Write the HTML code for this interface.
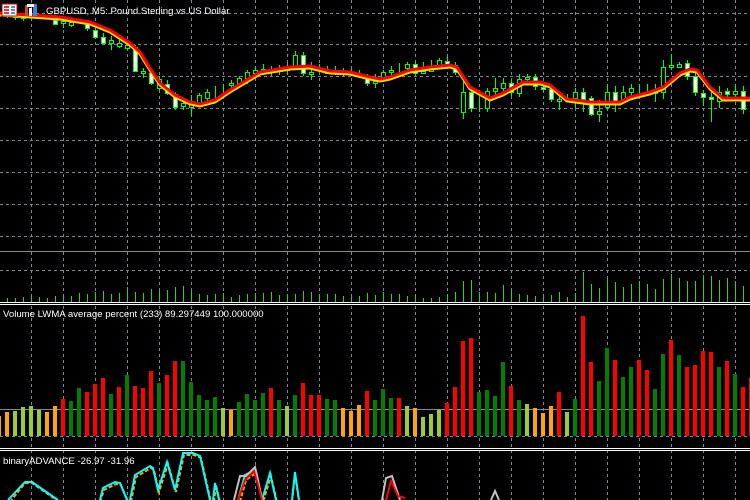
<!DOCTYPE html>
<html><head><meta charset="utf-8"><style>
html,body{margin:0;padding:0;background:#000;width:750px;height:500px;overflow:hidden}
svg{display:block}
text{font-family:"Liberation Sans",sans-serif;font-size:9.6px;fill:#fff}
</style></head><body>
<svg width="750" height="500" viewBox="0 0 750 500" xmlns="http://www.w3.org/2000/svg">
<rect width="750" height="500" fill="#000"/>
<g stroke="#7d8796" stroke-width="1" stroke-dasharray="3,3" fill="none" shape-rendering="crispEdges">
<path d="M31.5 0V500M63.5 0V500M95.5 0V500M127.5 0V500M159.5 0V500M191.5 0V500M223.5 0V500M255.5 0V500M287.5 0V500M319.5 0V500M351.5 0V500M383.5 0V500M415.5 0V500M447.5 0V500M479.5 0V500M511.5 0V500M543.5 0V500M575.5 0V500M607.5 0V500M639.5 0V500M671.5 0V500M703.5 0V500M735.5 0V500"/>
<path d="M0 13.5H750M0 44.5H750M0 76.5H750M0 108.5H750M0 140.5H750M0 172.5H750M0 204.5H750M0 236.5H750M0 270.5H750M0 436.5H750"/>
</g>
<path d="M0 251.5H750M0 409.5H750" stroke="#8a8a8a" stroke-width="1" shape-rendering="crispEdges"/>
<!-- volume lines -->
<g stroke="#32cd32" stroke-width="1" shape-rendering="crispEdges">
<path d="M7.5 302v-4M15.5 302v-4M23.5 302v-5M31.5 302v-6M39.5 302v-5M47.5 302v-4M55.5 302v-6M63.5 302v-6M71.5 302v-6M79.5 302v-9M87.5 302v-8M95.5 302v-10M103.5 302v-11M111.5 302v-8M119.5 302v-9M127.5 302v-15M135.5 302v-10M143.5 302v-9M151.5 302v-13M159.5 302v-11M167.5 302v-12M175.5 302v-15M183.5 302v-16M191.5 302v-11M199.5 302v-8M207.5 302v-7M215.5 302v-8M223.5 302v-9M231.5 302v-5M239.5 302v-7M247.5 302v-8M255.5 302v-9M263.5 302v-9M271.5 302v-10M279.5 302v-7M287.5 302v-8M295.5 302v-8M303.5 302v-11M311.5 302v-10M319.5 302v-8M327.5 302v-8M335.5 302v-8M343.5 302v-6M351.5 302v-5M359.5 302v-6M367.5 302v-9M375.5 302v-7M383.5 302v-10M391.5 302v-8M399.5 302v-8M407.5 302v-6M415.5 302v-8M423.5 302v-4M431.5 302v-4M439.5 302v-5M447.5 302v-8M455.5 302v-10M463.5 302v-21M471.5 302v-22M479.5 302v-10M487.5 302v-10M495.5 302v-9M503.5 302v-17M511.5 302v-13M519.5 302v-8M527.5 302v-7M535.5 302v-6M543.5 302v-5M551.5 302v-7M559.5 302v-10M567.5 302v-5M575.5 302v-9M583.5 302v-30M591.5 302v-18M599.5 302v-14M607.5 302v-23M615.5 302v-20M623.5 302v-15M631.5 302v-18M639.5 302v-21M647.5 302v-18M655.5 302v-13M663.5 302v-23M671.5 302v-28M679.5 302v-24M687.5 302v-21M695.5 302v-21M703.5 302v-27M711.5 302v-26M719.5 302v-22M727.5 302v-24M735.5 302v-21M743.5 302v-16"/>
</g>
<path d="M0 302.5H750M0 304.5H750M0 448.5H750M0 450.5H750" stroke="#fff" stroke-width="1" shape-rendering="crispEdges"/>
<!-- histogram -->
<g shape-rendering="crispEdges">
<g fill="#ffa500"><rect x="-3" y="416" width="4" height="20"/><rect x="5" y="412" width="4" height="24"/><rect x="45" y="412" width="4" height="24"/><rect x="53" y="406" width="4" height="30"/><rect x="229" y="410" width="4" height="26"/><rect x="341" y="408" width="4" height="28"/><rect x="349" y="411" width="4" height="25"/><rect x="357" y="405" width="4" height="31"/><rect x="413" y="408" width="4" height="28"/><rect x="533" y="408" width="4" height="28"/><rect x="541" y="413" width="4" height="23"/><rect x="549" y="406" width="4" height="30"/></g>
<g fill="#9acd32"><rect x="13" y="411" width="4" height="25"/><rect x="21" y="407" width="4" height="29"/><rect x="29" y="406" width="4" height="30"/><rect x="37" y="410" width="4" height="26"/><rect x="221" y="408" width="4" height="28"/><rect x="285" y="406" width="4" height="30"/><rect x="405" y="406" width="4" height="30"/><rect x="421" y="417" width="4" height="19"/><rect x="429" y="414" width="4" height="22"/><rect x="437" y="410" width="4" height="26"/><rect x="525" y="404" width="4" height="32"/><rect x="565" y="412" width="4" height="24"/></g>
<g fill="#007f00"><rect x="69" y="401" width="4" height="35"/><rect x="77" y="388" width="4" height="48"/><rect x="109" y="394" width="4" height="42"/><rect x="125" y="375" width="4" height="61"/><rect x="157" y="383" width="4" height="53"/><rect x="181" y="361" width="4" height="75"/><rect x="189" y="382" width="4" height="54"/><rect x="197" y="395" width="4" height="41"/><rect x="205" y="400" width="4" height="36"/><rect x="213" y="397" width="4" height="39"/><rect x="237" y="402" width="4" height="34"/><rect x="245" y="394" width="4" height="42"/><rect x="253" y="400" width="4" height="36"/><rect x="261" y="393" width="4" height="43"/><rect x="277" y="400" width="4" height="36"/><rect x="293" y="395" width="4" height="41"/><rect x="325" y="399" width="4" height="37"/><rect x="333" y="400" width="4" height="36"/><rect x="373" y="400" width="4" height="36"/><rect x="381" y="389" width="4" height="47"/><rect x="389" y="398" width="4" height="38"/><rect x="477" y="392" width="4" height="44"/><rect x="485" y="390" width="4" height="46"/><rect x="493" y="396" width="4" height="40"/><rect x="501" y="362" width="4" height="74"/><rect x="517" y="400" width="4" height="36"/><rect x="573" y="399" width="4" height="37"/><rect x="597" y="381" width="4" height="55"/><rect x="605" y="348" width="4" height="88"/><rect x="621" y="377" width="4" height="59"/><rect x="629" y="367" width="4" height="69"/><rect x="653" y="389" width="4" height="47"/><rect x="661" y="354" width="4" height="82"/><rect x="677" y="355" width="4" height="81"/><rect x="717" y="367" width="4" height="69"/><rect x="733" y="374" width="4" height="62"/></g>
<g fill="#ff0000"><rect x="61" y="399" width="4" height="37"/><rect x="85" y="392" width="4" height="44"/><rect x="93" y="384" width="4" height="52"/><rect x="101" y="378" width="4" height="58"/><rect x="117" y="387" width="4" height="49"/><rect x="133" y="386" width="4" height="50"/><rect x="141" y="388" width="4" height="48"/><rect x="149" y="371" width="4" height="65"/><rect x="165" y="375" width="4" height="61"/><rect x="173" y="361" width="4" height="75"/><rect x="269" y="388" width="4" height="48"/><rect x="301" y="383" width="4" height="53"/><rect x="309" y="395" width="4" height="41"/><rect x="317" y="395" width="4" height="41"/><rect x="365" y="391" width="4" height="45"/><rect x="397" y="398" width="4" height="38"/><rect x="445" y="403" width="4" height="33"/><rect x="453" y="387" width="4" height="49"/><rect x="461" y="341" width="4" height="95"/><rect x="469" y="338" width="4" height="98"/><rect x="509" y="386" width="4" height="50"/><rect x="557" y="392" width="4" height="44"/><rect x="581" y="316" width="4" height="120"/><rect x="589" y="362" width="4" height="74"/><rect x="613" y="360" width="4" height="76"/><rect x="637" y="360" width="4" height="76"/><rect x="645" y="370" width="4" height="66"/><rect x="669" y="340" width="4" height="96"/><rect x="685" y="367" width="4" height="69"/><rect x="693" y="365" width="4" height="71"/><rect x="701" y="351" width="4" height="85"/><rect x="709" y="352" width="4" height="84"/><rect x="725" y="361" width="4" height="75"/><rect x="741" y="387" width="4" height="49"/><rect x="749" y="378" width="4" height="58"/></g>
</g>
<!-- candles wicks -->
<g stroke="#00ff00" stroke-width="1" fill="none" shape-rendering="crispEdges">
<path d="M7.5 11V18M15.5 13V20M23.5 14V21M55.5 15V25M63.5 20V28M71.5 19V27M87.5 20V31M95.5 28V39M103.5 33V44M111.5 36V50M119.5 40V48M127.5 41V50M135.5 45V72M143.5 68V78M151.5 70V85M159.5 76V91M167.5 80V95M175.5 92V110M183.5 100V110M191.5 95V116M199.5 93V106M207.5 89V105M215.5 86V100M223.5 84V92M231.5 80V88M239.5 76V88M247.5 70V84M255.5 66V77M263.5 64V75M271.5 66V76M279.5 65V75M287.5 63V75M295.5 51V68M303.5 52V76M311.5 62V80M319.5 64V72M327.5 66V74M335.5 66V75M343.5 68V76M351.5 68V76M359.5 70V78M367.5 74V86M375.5 74V88M383.5 70V80M391.5 66V76M399.5 63V74M407.5 62V70M415.5 62V76M423.5 62V70M431.5 60V72M439.5 58V68M447.5 56V66M455.5 62V75M463.5 80V119M471.5 88V112M479.5 98V112M487.5 88V112M495.5 78V95M503.5 78V92M511.5 80V96M519.5 74V97M527.5 74V82M535.5 74V90M543.5 84V92M551.5 86V102M559.5 94V110M567.5 94V102M575.5 88V108M583.5 88V112M591.5 96V116M599.5 100V122M607.5 84V110M615.5 86V112M623.5 86V102M631.5 84V96M639.5 84V94M647.5 84V95M655.5 84V102M663.5 60V99M671.5 54V70M679.5 62V68M687.5 60V80M695.5 72V96M703.5 90V106M711.5 90V122M719.5 86V108M727.5 88V98M735.5 84V100M743.5 86V114"/>
</g>
<g stroke="#00ff00" stroke-width="1" shape-rendering="crispEdges">
<g fill="#000"><rect x="5.5" y="13.5" width="4" height="3"/><rect x="13.5" y="15.5" width="4" height="2"/><rect x="21.5" y="16.5" width="4" height="2"/><rect x="61.5" y="21.5" width="4" height="2"/><rect x="69.5" y="22.5" width="4" height="3"/><rect x="109.5" y="40.5" width="4" height="3"/><rect x="117.5" y="43.5" width="4" height="3"/><rect x="125.5" y="45.5" width="4" height="3"/><rect x="141.5" y="71.5" width="4" height="2"/><rect x="157.5" y="79.5" width="4" height="9"/><rect x="181.5" y="103.5" width="4" height="3"/><rect x="189.5" y="103.5" width="4" height="4"/><rect x="197.5" y="95.5" width="4" height="9"/><rect x="205.5" y="92.5" width="4" height="6"/><rect x="229.5" y="83.5" width="4" height="2"/><rect x="237.5" y="78.5" width="4" height="5"/><rect x="245.5" y="72.5" width="4" height="6"/><rect x="253.5" y="70.5" width="4" height="3"/><rect x="261.5" y="69.5" width="4" height="2"/><rect x="285.5" y="67.5" width="4" height="3"/><rect x="293.5" y="55.5" width="4" height="11"/><rect x="309.5" y="72.5" width="4" height="2"/><rect x="325.5" y="71.5" width="4" height="2"/><rect x="333.5" y="70.5" width="4" height="2"/><rect x="373.5" y="81.5" width="4" height="2"/><rect x="381.5" y="72.5" width="4" height="5"/><rect x="389.5" y="70.5" width="4" height="2"/><rect x="405.5" y="64.5" width="4" height="4"/><rect x="421.5" y="71.5" width="4" height="2"/><rect x="429.5" y="66.5" width="4" height="5"/><rect x="437.5" y="60.5" width="4" height="6"/><rect x="461.5" y="92.5" width="4" height="20"/><rect x="485.5" y="91.5" width="4" height="17"/><rect x="493.5" y="88.5" width="4" height="3"/><rect x="501.5" y="83.5" width="4" height="5"/><rect x="517.5" y="79.5" width="4" height="14"/><rect x="525.5" y="77.5" width="4" height="2"/><rect x="557.5" y="99.5" width="4" height="2"/><rect x="573.5" y="92.5" width="4" height="6"/><rect x="597.5" y="111.5" width="4" height="3"/><rect x="605.5" y="92.5" width="4" height="15"/><rect x="621.5" y="92.5" width="4" height="7"/><rect x="629.5" y="88.5" width="4" height="4"/><rect x="653.5" y="91.5" width="4" height="2"/><rect x="661.5" y="67.5" width="4" height="25"/><rect x="669.5" y="65.5" width="4" height="2"/><rect x="677.5" y="64.5" width="4" height="3"/><rect x="717.5" y="92.5" width="4" height="9"/><rect x="733.5" y="91.5" width="4" height="3"/></g>
<g fill="#fff"><rect x="53.5" y="20.5" width="4" height="4"/><rect x="85.5" y="22.5" width="4" height="6"/><rect x="93.5" y="30.5" width="4" height="7"/><rect x="101.5" y="37.5" width="4" height="6"/><rect x="133.5" y="47.5" width="4" height="24"/><rect x="149.5" y="73.5" width="4" height="10"/><rect x="165.5" y="84.5" width="4" height="9"/><rect x="173.5" y="94.5" width="4" height="13"/><rect x="301.5" y="55.5" width="4" height="18"/><rect x="365.5" y="77.5" width="4" height="6"/><rect x="413.5" y="64.5" width="4" height="9"/><rect x="445.5" y="61.5" width="4" height="4"/><rect x="453.5" y="65.5" width="4" height="7"/><rect x="469.5" y="92.5" width="4" height="16"/><rect x="509.5" y="83.5" width="4" height="9"/><rect x="533.5" y="77.5" width="4" height="9"/><rect x="541.5" y="87.5" width="4" height="2"/><rect x="549.5" y="89.5" width="4" height="10"/><rect x="581.5" y="92.5" width="4" height="7"/><rect x="589.5" y="98.5" width="4" height="16"/><rect x="613.5" y="92.5" width="4" height="10"/><rect x="685.5" y="63.5" width="4" height="13"/><rect x="693.5" y="76.5" width="4" height="16"/><rect x="701.5" y="93.5" width="4" height="4"/><rect x="709.5" y="97.5" width="4" height="2"/><rect x="725.5" y="91.5" width="4" height="3"/><rect x="741.5" y="91.5" width="4" height="18"/></g>
</g>
<!-- MA lines -->
<path d="M0 15 L30 17 L60 19 L90 24 L110 32 L130 45 L140 54 L150 70 L160 85 L175 97 L190 104 L200 106 L215 102 L230 92 L260 74 L290 69 L310 68 L330 73 L350 74 L370 79 L380 81 L390 79 L410 72 L430 69 L450 67 L457 69 L470 89 L490 100 L503 95 L523 84 L540 84 L550 87 L567 101 L590 104 L620 104 L630 99 L650 94 L663 89 L680 75 L690 71 L697 72 L710 89 L723 100 L750 100" fill="none" stroke="#ffd700" stroke-width="3"/>
<path d="M0 13 L30 15 L60 17 L90 22 L110 30 L130 43 L140 52 L150 68 L160 83 L175 95 L190 102 L200 104 L215 100 L230 90 L260 72 L290 67 L310 66 L330 71 L350 72 L370 77 L380 79 L390 77 L410 70 L430 67 L450 65 L457 67 L470 87 L490 98 L503 93 L523 82 L540 82 L550 85 L567 99 L590 102 L620 102 L630 97 L650 92 L663 87 L680 73 L690 69 L697 70 L710 87 L723 98 L750 98" fill="none" stroke="#ff0000" stroke-width="3"/>
<!-- bottom panel -->
<g fill="none" stroke-width="2">
<path d="M10 502 L25 483 L32 483 L55 499 L58 502 M100 502 L104 490 L116 484 L121 485 L128 502 M131 502 L136 477 L151 468 L154 470 L159 492 L168 464 L176 492 L184 455 L194 455 L201 458 L211 502 M214 502 L216 485 L220 502 M240 502 L246 480 L256 473 L263 502 L271 476 L277 502 M292 502 L295 474 L299 502" stroke="#ffa500" stroke-dasharray="4,2"/>
<path d="M8 500 L25 482 L32 482 L55 498 L58 500 M100 500 L103 488 L115 482 L120 483 L127 500 M130 500 L135 475 L150 466 L153 468 L158 490 L167 462 L175 490 L183 453 L193 453 L200 456 L210 500 M213 500 L215 483 L219 500 M238 500 L245 475 L255 470 L262 500 L270 473 L276 500 M292 500 L295 472 L299 500" stroke="#00ffff"/>
<path d="M234 500 L240 476 L246 476 L255 467 L258 480 L262 500 M382 500 L386 478 L392 476 L400 500 M491 500 L495 491 L499 500" stroke="#c0c0c0"/>
<path d="M238 500 L245 480 L254 471 L258 485 L262 500 M386 500 L391 481 L398 496 L405 498" stroke="#ff0000"/>
</g>
<!-- header icons -->
<rect x="2" y="4" width="15" height="12" fill="#fff" stroke="#c00" stroke-width="1"/>
<path d="M4 7h5M4 10h5M4 13h5" stroke="#c00" stroke-width="1.5"/>
<path d="M11 7h4M11 10h4M11 13h4" stroke="#3060c0" stroke-width="1.5"/>
<rect x="25" y="5" width="3" height="11" fill="#d04040"/>
<rect x="29" y="8" width="3" height="8" fill="#fff"/>
<rect x="33" y="4" width="4" height="12" fill="#4080d0"/>
<rect x="27" y="4" width="7" height="3" fill="#fff"/>
<text x="46" y="14">GBPUSD, M5:  Pound Sterling vs US Dollar</text>
<text x="3" y="317">Volume LWMA average percent (233) 89.297449 100.000000</text>
<text x="3" y="464">binaryADVANCE -26.97 -31.96</text>
</svg>
</body></html>
